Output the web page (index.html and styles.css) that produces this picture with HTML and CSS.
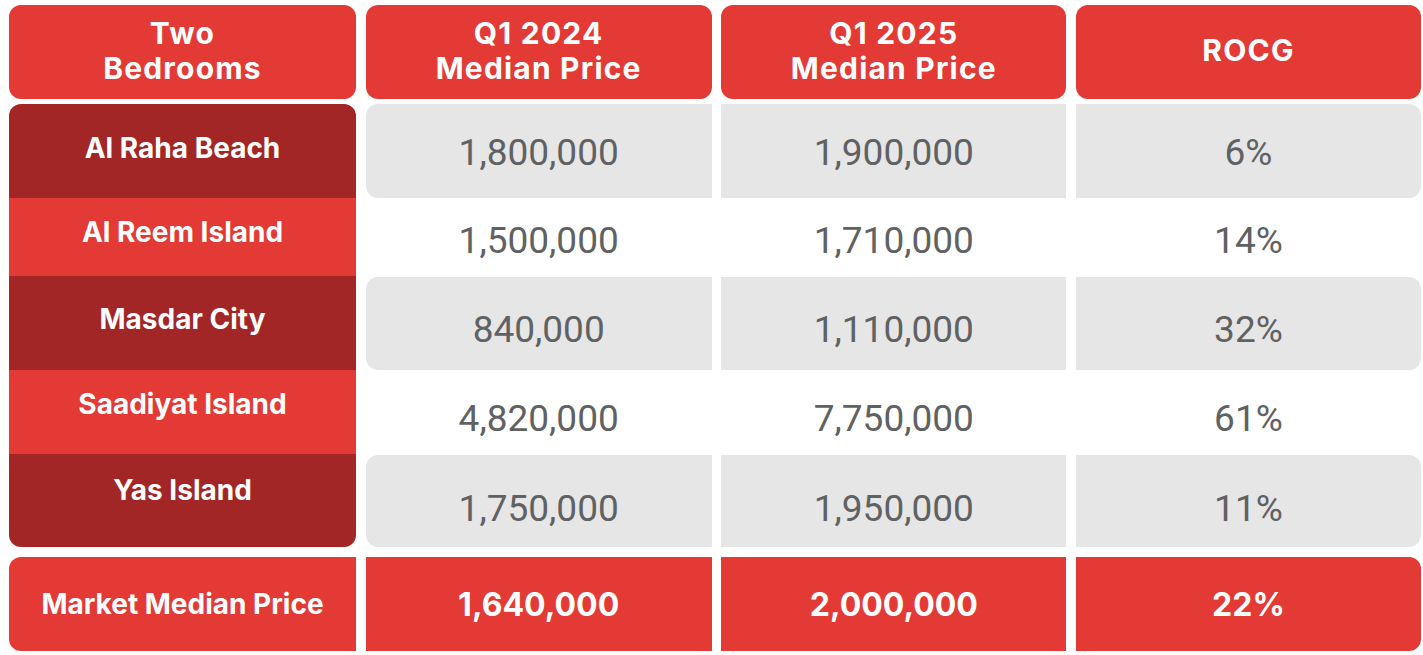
FILE: index.html
```html
<!DOCTYPE html>
<html lang="en">
<head>
<meta charset="utf-8">
<title>Two Bedrooms Median Price</title>
<link rel="stylesheet" href="styles.css">
</head>
<body>
<div class="table">
  <div class="row head">
    <div class="cell">Two<br>Bedrooms</div>
    <div class="cell">Q1 2024<br>Median Price</div>
    <div class="cell">Q1 2025<br>Median Price</div>
    <div class="cell">ROCG</div>
  </div>
  <div class="body">
    <div class="row r1 shade">
      <div class="label dark">Al Raha Beach</div>
      <div class="val">1,800,000</div>
      <div class="val">1,900,000</div>
      <div class="val">6%</div>
    </div>
    <div class="row r2">
      <div class="label">Al Reem Island</div>
      <div class="val">1,500,000</div>
      <div class="val">1,710,000</div>
      <div class="val">14%</div>
    </div>
    <div class="row r3 shade">
      <div class="label dark">Masdar City</div>
      <div class="val">840,000</div>
      <div class="val">1,110,000</div>
      <div class="val">32%</div>
    </div>
    <div class="row r4">
      <div class="label">Saadiyat Island</div>
      <div class="val">4,820,000</div>
      <div class="val">7,750,000</div>
      <div class="val">61%</div>
    </div>
    <div class="row r5 shade">
      <div class="label dark">Yas Island</div>
      <div class="val">1,750,000</div>
      <div class="val">1,950,000</div>
      <div class="val">11%</div>
    </div>
  </div>
  <div class="row foot">
    <div class="cell">Market Median Price</div>
    <div class="cell num">1,640,000</div>
    <div class="cell num">2,000,000</div>
    <div class="cell num">22%</div>
  </div>
</div>
</body>
</html>
```

FILE: styles.css
```css
html, body {
  margin: 0;
  padding: 0;
  background: #ffffff;
}

body {
  font-family: Inter, "Liberation Sans", sans-serif;
}

.table {
  width: 1412px;
  padding: 5px 2px 4px 9px;
  display: flex;
  flex-direction: column;
}

.row {
  display: grid;
  grid-template-columns: 347px 346px 345px 345px;
  column-gap: 9.66px;
}

.head {
  height: 94px;
}

.head .cell {
  background: #e43a36;
  color: #ffffff;
  border-radius: 12px;
  display: flex;
  align-items: center;
  justify-content: center;
  text-align: center;
  font-weight: 700;
  font-size: 30px;
  letter-spacing: 1.2px;
  line-height: 35px;
  padding-bottom: 3px;
  box-sizing: border-box;
}

.body {
  margin-top: 5px;
}

.label {
  background: #e43a36;
  color: #ffffff;
  font-weight: 700;
  font-size: 28px;
  display: flex;
  align-items: center;
  justify-content: center;
  box-sizing: border-box;
}

.label.dark {
  background: #a22626;
}

.r1 .label {
  border-radius: 12px 12px 0 0;
}

.r5 .label {
  border-radius: 0 0 12px 12px;
}

.val {
  color: #5f6163;
  font-family: Roboto, "Liberation Sans", sans-serif;
  font-size: 37px;
  font-weight: 400;
  display: flex;
  align-items: center;
  justify-content: center;
  box-sizing: border-box;
}

.shade .val {
  background: #e6e6e6;
}

.shade .val:nth-child(2) {
  border-radius: 12px 0 0 12px;
}

.shade .val:nth-child(4) {
  border-radius: 0 12px 12px 0;
}

.r1 { height: 94px; }
.r2 { height: 78px; }
.r3 { height: 94px; }
.r4 { height: 84px; }
.r5 { height: 93px; }

.r1 .label { padding-bottom: 6px; }
.r2 .label { padding-bottom: 10px; }
.r3 .label { padding-bottom: 8px; }
.r4 .label { padding-bottom: 16px; }
.r5 .label { padding-bottom: 22px; }

.r1 .val { padding-top: 2px; }
.r2 .val { padding-top: 6px; }
.r3 .val { padding-top: 12px; }
.r4 .val { padding-top: 12px; }
.r5 .val { padding-top: 15px; }

.r3 .val, .r5 .val {
  margin-top: 1px;
}

.foot {
  margin-top: 10px;
  height: 94px;
}

.foot .cell {
  background: #e43a36;
  color: #ffffff;
  font-weight: 700;
  font-size: 28px;
  display: flex;
  align-items: center;
  justify-content: center;
}

.foot .cell.num {
  font-size: 32px;
}

.foot .cell:first-child {
  border-radius: 12px 0 0 12px;
}

.foot .cell:last-child {
  border-radius: 0 12px 12px 0;
}
```
